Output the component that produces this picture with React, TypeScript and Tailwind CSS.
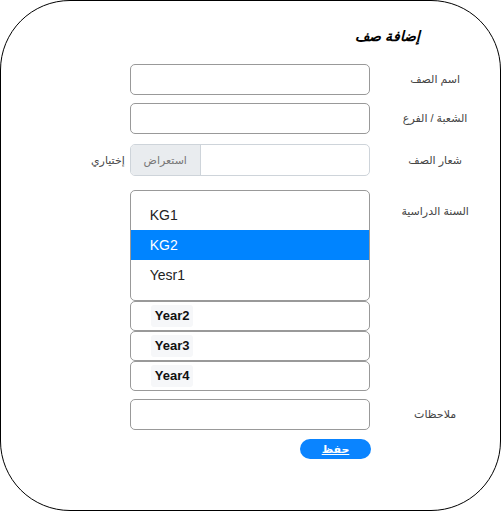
import React from "react";

const font = { fontFamily: '"Liberation Sans", "DejaVu Sans", sans-serif' };

const Label = ({ children, className = "" }: { children: React.ReactNode; className?: string }) => (
  <div className={`w-[130px] text-center text-[11px] text-[#444] ${className}`} dir="rtl">
    {children}
  </div>
);

const years = ["Year2", "Year3", "Year4"];

export default function App() {
  return (
    <div className="w-[502px] h-[512px] bg-white" style={font}>
      <div className="w-[501px] h-[511px] border border-black rounded-[70px] flex flex-col">
        {/* title */}
        <div className="flex justify-end pr-[80px] pt-[25px]" dir="ltr">
          <p className="text-[14px] font-bold italic text-black" dir="rtl">
            إضافة صف
          </p>
        </div>

        {/* class name */}
        <div className="flex items-center mt-[17px]">
          <div className="w-[129px]" />
          <div className="w-[241px] h-[31px] border border-[#999] rounded-[5px]" />
          <Label>اسم الصف</Label>
        </div>

        {/* section */}
        <div className="flex items-center mt-[8px]">
          <div className="w-[129px]" />
          <div className="w-[241px] h-[31px] border border-[#999] rounded-[5px]" />
          <Label>الشعبة / الفرع</Label>
        </div>

        {/* logo */}
        <div className="flex items-center mt-[10px]">
          <div className="w-[129px] flex justify-end pr-[5px]">
            <span className="text-[11px] text-[#444]" dir="rtl">
              إختياري
            </span>
          </div>
          <div className="w-[241px] h-[32px] border border-[#ced4da] rounded-[5px] flex overflow-hidden">
            <div className="w-[70px] bg-[#e9ecef] border-r border-[#ced4da] flex items-center justify-center text-[11px] text-[#777]" dir="rtl">
              استعراض
            </div>
          </div>
          <Label>شعار الصف</Label>
        </div>

        {/* year */}
        <div className="flex items-start mt-[14px]">
          <div className="w-[129px]" />
          <div className="w-[241px] flex flex-col">
            <div className="h-[111px] border border-[#999] rounded-[5px] py-[9px] flex flex-col overflow-hidden">
              <div className="h-[30px] flex items-center pl-[19px] text-[14px] text-[#222]">KG1</div>
              <div className="h-[30px] flex items-center pl-[19px] text-[14px] text-white bg-[#0084ff]">KG2</div>
              <div className="h-[30px] flex items-center pl-[19px] text-[14px] text-[#222]">Yesr1</div>
            </div>
            {years.map((y) => (
              <div key={y} className="h-[30px] border border-[#999] rounded-[5px] flex items-center pl-[20px]">
                <span className="bg-[#f6f7f9] rounded-[3px] px-[4px] py-[1px] text-[13px] font-bold text-[#111]">
                  {y}
                </span>
              </div>
            ))}
          </div>
          <Label className="pt-[13px]">السنة الدراسية</Label>
        </div>

        {/* notes */}
        <div className="flex items-center mt-[8px]">
          <div className="w-[129px]" />
          <div className="w-[241px] h-[31px] border border-[#999] rounded-[5px]" />
          <Label>ملاحظات</Label>
        </div>

        {/* save */}
        <div className="flex mt-[9px]">
          <div className="w-[299px]" />
          <button className="w-[71px] h-[20px] rounded-full bg-[#0a84ff] text-white text-[11px] font-bold underline flex items-center justify-center" dir="rtl">
            حفظ
          </button>
        </div>
      </div>
    </div>
  );
}
